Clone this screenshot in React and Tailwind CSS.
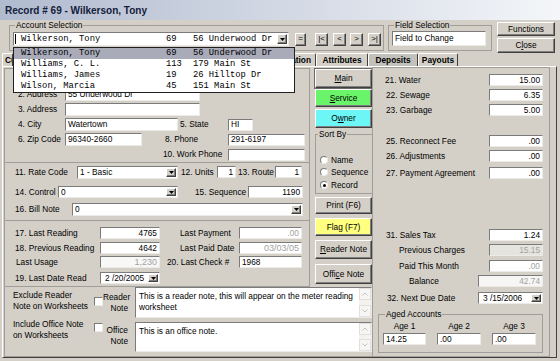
import React from 'react';

// classic win32 edges
const sunkenEdge = "border border-t-[#7b7b7b] border-l-[#7b7b7b] border-b-[#ecebe8] border-r-[#ecebe8]";
const raisedEdge = "border border-t-white border-l-white border-b-[#404040] border-r-[#404040] shadow-[inset_-1px_-1px_0_#808080]";
const etched = "border border-[#a09e98]";
const mono = "font-['Liberation_Mono',monospace] text-[8.8px]";

const Box = ({ className = "", h = "h-[12px]", bg = "bg-white", right, gray, children }) => (
  <div
    className={`${sunkenEdge} ${bg} ${h} shrink-0 flex items-center px-[2px] whitespace-nowrap overflow-hidden ${right ? "justify-end" : ""} ${gray ? "text-[#a2a2a2]" : ""} ${className}`}
  >
    {children}
  </div>
);

const Arrow = () => (
  <div className={`${raisedEdge} bg-[#d4d0c8] w-[10px] self-stretch shrink-0 flex items-center justify-center`}>
    <svg width="5" height="3" viewBox="0 0 5 3">
      <path d="M0 0H5L2.5 3Z" fill="#000" />
    </svg>
  </div>
);

const Combo = ({ className = "", h = "h-[13px]", children }) => (
  <div className={`${sunkenEdge} bg-white ${h} shrink-0 flex items-stretch p-[1px] ${className}`}>
    <div className="flex-1 flex items-center pl-[1px] whitespace-nowrap overflow-hidden">{children}</div>
    <Arrow />
  </div>
);

const Btn = ({ className = "", bg = "bg-[#d4d0c8]", children }) => (
  <div className={`${raisedEdge} ${bg} flex items-center justify-center shrink-0 whitespace-nowrap ${className}`}>
    {children}
  </div>
);

const U = ({ children }) => <span className="underline underline-offset-1">{children}</span>;

const Check = ({ className = "" }) => (
  <div className={`${sunkenEdge} bg-white w-[9px] h-[9px] shrink-0 ${className}`} />
);

const Radio = ({ checked, label }) => (
  <div className="flex items-center h-[12px]">
    <div className="w-[8px] h-[8px] rounded-full bg-white border border-t-[#7b7b7b] border-l-[#7b7b7b] border-b-[#ecebe8] border-r-[#ecebe8] flex items-center justify-center">
      {checked && <div className="w-[3px] h-[3px] rounded-full bg-black" />}
    </div>
    <span className="ml-[3px]">{label}</span>
  </div>
);

const ScrollBtn = ({ up }) => (
  <div className="h-[12px] border border-[#e2e0dc] bg-[#f7f6f4] flex items-center justify-center">
    <svg width="6" height="4" viewBox="0 0 6 4">
      <path d={up ? "M0.5 3.5L3 1L5.5 3.5" : "M0.5 0.5L3 3L5.5 0.5"} stroke="#c4c2bc" fill="none" />
    </svg>
  </div>
);

const Memo = ({ h, className = "", children }) => (
  <div className={`${sunkenEdge} bg-white flex-1 ${h} flex ${className}`}>
    <div className="flex-1 pl-[3px] pt-[3px] leading-[11px]">{children}</div>
    <div className="w-[12px] flex flex-col justify-between bg-[#f3f2ef]">
      <ScrollBtn up />
      <ScrollBtn />
    </div>
  </div>
);

const Tab = ({ className = "", children }) => (
  <div className={`h-[13px] border-t border-l border-r border-t-white border-l-white border-r-[#404040] rounded-t-[2px] flex items-center font-bold whitespace-nowrap overflow-hidden ${className}`}>
    {children}
  </div>
);

const AcctRow = ({ name, num, addr, hl }) => (
  <div className={`flex items-center h-[11px] pl-[7px] whitespace-nowrap ${hl ? "bg-[#a9abb9]" : ""}`}>
    <span className="w-[145px]">{name}</span>
    <span className="w-[27px]">{num}</span>
    <span>{addr}</span>
  </div>
);

const RRow = ({ cls, label, value, w = "w-[54px]", gray, bg }) => (
  <div className={`flex items-center h-[12px] pr-[6px] ${cls}`}>
    <div className="flex-1 whitespace-nowrap">{label}</div>
    <Box className={w} right gray={gray} bg={bg}>{value}</Box>
  </div>
);

const accounts = [
  { name: "Wilkerson, Tony", num: "69", addr: "56 Underwood Dr", hl: true },
  { name: "Williams, C. L.", num: "113", addr: "179 Main St" },
  { name: "Williams, James", num: "19", addr: "26 Hilltop Dr" },
  { name: "Wilson, Marcia", num: "45", addr: "151 Main St" },
];

export default function App() {
  return (
    <div className="w-[560px] h-[361px] bg-[#d4d0c8] relative overflow-hidden font-['Liberation_Sans',Arial,sans-serif] text-[8.3px] leading-none text-black">
      {/* title bar */}
      <div className="h-[20px] pt-[1px] pl-[5px] flex items-center bg-gradient-to-r from-[#b1bbcf] to-[#f4f6f9] text-[10px] font-bold text-[#14203c]">
        Record # 69 - Wilkerson, Tony
      </div>

      {/* top controls */}
      <div className="h-[32px] flex items-start">
        <fieldset className={`${etched} ml-[9px] w-[375px] h-[31px]`}>
          <legend className="ml-[5px] px-[1px] leading-[10px]">Account Selection</legend>
          <div className="flex items-center mt-[2px]">
            <div className={`${sunkenEdge} bg-white ml-[3px] w-[276px] h-[14px] flex items-stretch p-[1px] ${mono}`}>
              <div className="flex-1 flex items-center whitespace-nowrap">
                <div className="w-[1px] h-[10px] bg-black" />
                <span className="ml-[5px] w-[145px]">Wilkerson, Tony</span>
                <span className="w-[27px]">69</span>
                <span>56 Underwood Dr</span>
              </div>
              <Arrow />
            </div>
            <Btn className="ml-[6px] w-[11px] h-[13px] text-[8px]">=</Btn>
            <Btn className="ml-[9px] w-[13px] h-[13px] text-[8px]">|&lt;</Btn>
            <Btn className="ml-[5px] w-[13px] h-[13px] text-[8px]">&lt;</Btn>
            <Btn className="ml-[4px] w-[13px] h-[13px] text-[8px]">&gt;</Btn>
            <Btn className="ml-[5px] w-[13px] h-[13px] text-[8px]">&gt;|</Btn>
          </div>
        </fieldset>

        <fieldset className={`${etched} ml-[4px] w-[104px] h-[31px]`}>
          <legend className="ml-[5px] px-[1px] leading-[10px]">Field Selection</legend>
          <Box className="ml-[3px] mt-[1px] w-[94px]" h="h-[15px]">Field to Change</Box>
        </fieldset>

        <div className="ml-[5px] w-[58px] flex flex-col">
          <Btn className="mt-[2px] h-[14px]">Functions</Btn>
          <Btn className="mt-[2px] h-[15px]">C<U>l</U>ose</Btn>
        </div>
      </div>

      {/* tabs (the first ones sit under the open list) */}
      <div className="h-[14px] flex items-end pl-[2px]">
        <Tab className="w-[11px] pl-[2px]">
          <span className="w-[7px] overflow-hidden">Customer</span>
        </Tab>
        <Tab className="w-[119px]" />
        <Tab className="w-[70px]" />
        <Tab className="w-[114px] justify-end pr-[4px]">
          <span className="w-[18px] overflow-hidden flex justify-end">Information</span>
        </Tab>
        <Tab className="w-[52px] justify-center">Attributes</Tab>
        <Tab className="w-[50px] justify-center bg-[#c3c1bb]">Deposits</Tab>
        <Tab className="w-[40px] justify-center">Payouts</Tab>
      </div>

      {/* main tab page */}
      <div className="ml-[2px] w-[555px] h-[292px] border border-t-white border-l-white border-r-[#404040] border-b-[#404040] flex">
        <div className="ml-[1px] mt-[1px] w-[368px] flex flex-col">
          <div className="flex h-[219px]">
            {/* fields */}
            <div className={`${etched} w-[306px] h-[219px] flex flex-col`}>
              <div className="h-[93px] pt-[18px] flex flex-col">
                <div className="flex items-center h-[15px] pl-[13px]">
                  <div className="w-[47px]">2. Address</div>
                  <Box className="w-[135px]" h="h-[13px]">55 Underwood Dr</Box>
                </div>
                <div className="flex items-center h-[15px] pl-[13px]">
                  <div className="w-[47px]">3. Address</div>
                  <Box className="w-[135px]" h="h-[13px]"></Box>
                </div>
                <div className="flex items-center h-[15px] pl-[13px]">
                  <div className="w-[47px]">4. City</div>
                  <Box className="w-[113px]" h="h-[13px]">Watertown</Box>
                  <div className="ml-[2px] w-[48px]">5. State</div>
                  <Box className="w-[25px]" h="h-[12px]">HI</Box>
                </div>
                <div className="flex items-center h-[15px] pl-[13px]">
                  <div className="w-[47px]">6. Zip Code</div>
                  <Box className="w-[77px]" h="h-[13px]">96340-2660</Box>
                  <div className="ml-[23px] w-[63px]">8. Phone</div>
                  <Box className="w-[77px]" h="h-[12px]">291-6197</Box>
                </div>
                <div className="flex items-center h-[15px] pl-[13px]">
                  <div className="ml-[145px] w-[65px] whitespace-nowrap">10. Work Phone</div>
                  <Box className="w-[77px]" h="h-[12px]"></Box>
                </div>
              </div>

              <div className="h-[58px] border-t border-[#a09e98] flex flex-col">
                <div className="mt-[2px] h-[14px] flex items-center pl-[10px]">
                  <div className="w-[62px]">11. Rate Code</div>
                  <Combo className="w-[101px]">1 - Basic</Combo>
                  <div className="ml-[3px] w-[36px]">12. Units</div>
                  <Box className="w-[19px]" right>1</Box>
                  <div className="w-[39px] pl-[2px] whitespace-nowrap">13. Route</div>
                  <Box className="w-[27px]" right>1</Box>
                </div>
                <div className="mt-[6px] h-[14px] flex items-center pl-[10px]">
                  <div className="w-[43px]">14. Control</div>
                  <Combo className="w-[120px]" h="h-[12px]">0</Combo>
                  <div className="ml-[17px] w-[53px]">15. Sequence</div>
                  <Box className="w-[55px]" right>1190</Box>
                </div>
                <div className="mt-[3px] h-[14px] flex items-center pl-[10px]">
                  <div className="w-[57px]">16. Bill Note</div>
                  <Combo className="w-[231px]">0</Combo>
                </div>
              </div>

              <div className="h-[66px] border-t border-[#a09e98] flex flex-col">
                <div className="mt-[6px] h-[12px] flex items-center pl-[10px]">
                  <div className="w-[85px]">17. Last Reading</div>
                  <Box className="w-[60px]" right>4765</Box>
                  <div className="ml-[20px] w-[59px]">Last Payment</div>
                  <Box className="w-[63px]" right gray>.00</Box>
                </div>
                <div className="mt-[3px] h-[12px] flex items-center pl-[10px]">
                  <div className="w-[85px]">18. Previous Reading</div>
                  <Box className="w-[60px]" right>4642</Box>
                  <div className="ml-[20px] w-[59px]">Last Paid Date</div>
                  <Box className="w-[63px] text-[9px]" right gray>03/03/05</Box>
                </div>
                <div className="mt-[2px] h-[12px] flex items-center pl-[10px]">
                  <div className="w-[85px] pl-[1px]">Last Usage</div>
                  <Box className="w-[60px] text-[9px]" bg="bg-[#f8f8f7]" right gray>1,230</Box>
                  <div className="ml-[7px] w-[72px]">20. Last Check #</div>
                  <Box className="w-[63px]">1968</Box>
                </div>
                <div className="mt-[4px] h-[12px] flex items-center pl-[10px]">
                  <div className="w-[85px]">19. Last Date Read</div>
                  <div className={`${sunkenEdge} bg-white w-[60px] h-[12px] flex items-stretch p-[1px]`}>
                    <div className="flex-1 flex items-center pl-[3px]">2 /20/2005</div>
                    <Arrow />
                  </div>
                </div>
              </div>
            </div>

            {/* button column */}
            <div className="ml-[5px] w-[57px] flex flex-col">
              <Btn className="mt-[1px] h-[19px] outline outline-1 outline-[#6a6a6a]"><U>M</U>ain</Btn>
              <Btn className="mt-[1px] h-[18px]" bg="bg-[#6af46a]"><U>S</U>ervice</Btn>
              <Btn className="mt-[2px] h-[19px]" bg="bg-[#6cf6f6]">O<U>w</U>ner</Btn>
              <fieldset className={`${etched} mt-[1px] w-[58px] h-[65px]`}>
                <legend className="ml-[2px] px-[1px] leading-[10px]">Sort By</legend>
                <div className="pl-[4px] mt-[15px] flex flex-col">
                  <Radio label="Name" />
                  <Radio label="Sequence" />
                  <div className="mt-[1px]">
                    <Radio label="Record" checked />
                  </div>
                </div>
              </fieldset>
              <Btn className="mt-[3px] h-[17px]">Print (F6)</Btn>
              <Btn className="mt-[4px] h-[18px]" bg="bg-[#ffff80]">Flag (F7)</Btn>
              <Btn className="mt-[4px] h-[19px]"><U>R</U>eader Note</Btn>
              <Btn className="mt-[5px] h-[20px]">Offi<U>c</U>e Note</Btn>
            </div>
          </div>

          {/* notes */}
          <div className="border-l border-b border-[#a09e98] h-[70px] flex flex-col">
            <div className="flex h-[31px]">
              <div className="pl-[8px] w-[89px] pt-[3px] leading-[11px] whitespace-nowrap">
                Exclude Reader<br />Note on Worksheets
              </div>
              <Check className="mt-[10px]" />
              <div className="w-[25px] text-right pt-[5px] leading-[11px]">Reader<br />Note</div>
              <Memo h="h-[31px]" className="ml-[7px]">
                This is a reader note, this will appear on the meter reading<br />worksheet
              </Memo>
            </div>
            <div className="flex mt-[1px] h-[33px]">
              <div className="pl-[8px] w-[89px] leading-[11px] whitespace-nowrap">
                Include Office Note<br />on Worksheets
              </div>
              <Check className="mt-[4px]" />
              <div className="w-[25px] text-right pt-[6px] leading-[11px]">Office<br />Note</div>
              <Memo h="h-[30px]" className="ml-[7px] mt-[3px]">This is an office note.</Memo>
            </div>
          </div>
        </div>

        {/* charges panel */}
        <div className={`${etched} w-[178px] h-[290px] flex flex-col`}>
          <RRow cls="mt-[6px] pl-[12px]" label="21. Water" value="15.00" />
          <RRow cls="mt-[3px] pl-[13px]" label="22. Sewage" value="6.35" />
          <RRow cls="mt-[3px] pl-[13px]" label="23. Garbage" value="5.00" />
          <RRow cls="mt-[19px] pl-[13px]" label="25. Reconnect Fee" value=".00" />
          <RRow cls="mt-[3px] pl-[13px]" label="26. Adjustments" value=".00" />
          <RRow cls="mt-[5px] pl-[13px]" label="27. Payment Agreement" value=".00" />
          <RRow cls="mt-[50px] pl-[13px]" label="31. Sales Tax" value="1.24" />
          <RRow cls="mt-[3px] pl-[26px]" label="Previous Charges" value="15.15" gray bg="bg-[#e6e4df]" />
          <RRow cls="mt-[4px] pl-[26px]" label="Paid This Month" value=".00" gray />
          <RRow cls="mt-[3px] pl-[36px]" label="Balance" value="42.74" w="w-[65px]" gray bg="bg-[#f6f6f5]" />
          <div className="mt-[5px] h-[12px] flex items-center pl-[14px] pr-[6px]">
            <div className="flex-1">32. Next Due Date</div>
            <div className={`${sunkenEdge} bg-white w-[65px] h-[12px] flex items-stretch p-[1px]`}>
              <div className="flex-1 flex items-center pl-[3px]">3 /15/2006</div>
              <Arrow />
            </div>
          </div>
          <fieldset className={`${etched} ml-[5px] mt-[5px] w-[165px] h-[44px]`}>
            <legend className="ml-[6px] px-[1px] leading-[10px]">Aged Accounts</legend>
            <div className="flex pl-[4px] gap-[11px] mt-[2px]">
              {[["Age 1", "14.25"], ["Age 2", ".00"], ["Age 3", ".00"]].map(([l, v], i) => (
                <div key={i} className="flex flex-col items-center">
                  <div className="h-[10px] flex items-center">{l}</div>
                  <Box className={i === 0 ? "mt-[2px] w-[43px]" : "mt-[2px] w-[44px]"}>{v}</Box>
                </div>
              ))}
            </div>
          </fieldset>
        </div>
      </div>

      {/* open account drop-down list */}
      <div className={`absolute left-[13px] top-[47px] w-[282px] h-[46px] bg-white border border-[#202020] ${mono}`}>
        {accounts.map((a) => (
          <AcctRow key={a.name} {...a} />
        ))}
      </div>
    </div>
  );
}
